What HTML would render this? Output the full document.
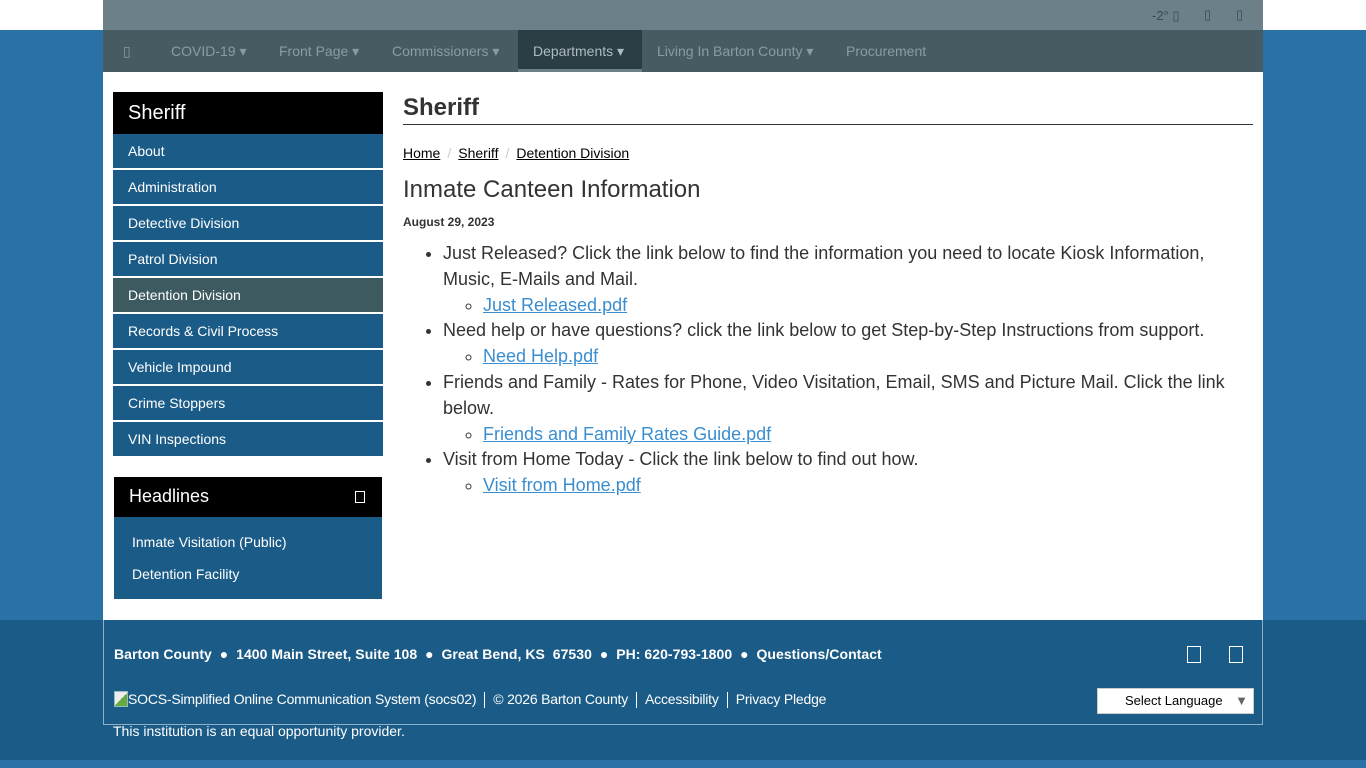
<!DOCTYPE html>
<html><head><meta charset="utf-8"><style>
*{box-sizing:border-box;margin:0;padding:0}
body{width:1366px;height:768px;overflow:hidden;background:#2a71a6;font-family:"Liberation Sans",Arial,sans-serif;position:relative}
.topw{position:absolute;left:0;top:0;width:1366px;height:30px;background:#fff}
.top{position:absolute;left:103px;top:0;width:1160px;height:30px;background:#6c8089;color:#3c4a50;font-size:13px}
.nav{position:absolute;left:103px;top:30px;width:1160px;height:42px;background:#475b63}
.nav span{position:absolute;top:13px;color:#8a9ca3;font-size:14px}
.nav .act{background:#2b3d45;top:0;height:42px;padding-top:13px;border-bottom:3px solid #6c8089;color:#aebcc1}
.main{position:absolute;left:103px;top:72px;width:1160px;height:548px;background:#fff}
.side{position:absolute;left:10px;top:20px;width:270px}
.sh{background:#000;color:#fff;font-size:20px;height:42px;line-height:42px;padding-left:15px}
.si{background:#1b5b87;color:#fff;font-size:14px;height:34px;line-height:34px;padding-left:15px;margin-bottom:2px}
.si.d{background:#3d5a60}
.hl{position:absolute;left:11px;top:405px;width:268px;height:122px;background:#1b5b87}
.hl .h{background:#000;color:#fff;font-size:18px;height:40px;line-height:38px;padding-left:15px;position:relative}
.hl .h i{position:absolute;right:17px;top:14px;width:10px;height:12px;border:1px solid #fff}
.hl p{color:#fff;font-size:14px;padding-left:18px;margin-top:17px}
.hl p+p{margin-top:16px}
.cont{position:absolute;left:300px;top:0;width:850px;color:#333}
h1{font-size:24px;font-weight:bold;margin-top:20px;height:33px;border-bottom:1px solid #333;padding-top:2px}
.bc{font-size:14px;margin-top:20px;color:#000}
.bc a{color:#000;text-decoration:underline}
.bc b{color:#ccc;font-weight:normal;margin:0 7px}
h2{font-size:24px;font-weight:normal;margin-top:15px}
.dt{font-size:12px;font-weight:bold;margin-top:11px}
ul{margin-top:12px;padding-left:40px;font-size:18px;line-height:25.8px;color:#333}
ul ul{margin-top:0;list-style:circle}
ul a{color:#3a8ed0;text-decoration:underline}
.foot{position:absolute;left:0;top:620px;width:1366px;height:140px;background:#1b5b87}
.fbox{position:absolute;left:103px;top:0;width:1160px;height:105px;border:1px solid #8fb0c8;border-top:none}
.f1{position:absolute;left:10px;top:26px;color:#fff;font-size:14px;font-weight:bold;letter-spacing:0.05px}
.f2{position:absolute;left:10px;top:71px;color:#fff;font-size:14px;letter-spacing:-0.2px}
.f2 s{text-decoration:none;border-left:1px solid #fff;margin:0 8px;display:inline-block;height:16px;vertical-align:middle}
.f2 em{display:inline-block;width:14px;height:16px;border:1px solid #9bb;background:linear-gradient(135deg,#eee 50%,#6a4 50%);vertical-align:-3px}
.f3{position:absolute;left:113px;top:103px;color:#fff;font-size:14px}
.ic{position:absolute;top:26px;width:14px;height:17px;border:1.5px solid #fff}
.lang{position:absolute;left:993px;top:68px;width:157px;height:26px;background:#fff;border:1px solid #ccc;font-size:13px;line-height:24px;padding-left:27px;color:#000}
</style></head><body>
<div class="topw"></div>
<div class="top"><span style="position:absolute;left:1049px;top:8px">-2° ▯</span><span style="position:absolute;left:1101px;top:7px">▯</span><span style="position:absolute;left:1133px;top:7px">▯</span></div>
<div class="nav">
<span style="left:20px">▯</span>
<span style="left:68px">COVID-19 ▾</span>
<span style="left:176px">Front Page ▾</span>
<span style="left:289px">Commissioners ▾</span>
<span class="act" style="left:415px;width:124px;padding-left:15px">Departments ▾</span>
<span style="left:554px">Living In Barton County ▾</span>
<span style="left:743px">Procurement</span>
</div>
<div class="main">
<div class="side">
<div class="sh">Sheriff</div>
<div class="si">About</div><div class="si">Administration</div><div class="si">Detective Division</div><div class="si">Patrol Division</div><div class="si d">Detention Division</div><div class="si">Records &amp; Civil Process</div><div class="si">Vehicle Impound</div><div class="si">Crime Stoppers</div><div class="si">VIN Inspections</div>
</div>
<div class="hl"><div class="h">Headlines<i></i></div><p>Inmate Visitation (Public)</p><p>Detention Facility</p></div>
<div class="cont">
<h1>Sheriff</h1>
<div class="bc"><a>Home</a><b>/</b><a>Sheriff</a><b>/</b><a>Detention Division</a></div>
<h2>Inmate Canteen Information</h2>
<div class="dt">August 29, 2023</div>
<ul>
<li>Just Released? Click the link below to find the information you need to locate Kiosk Information, Music, E-Mails and Mail.<ul><li><a>Just Released.pdf</a></li></ul></li>
<li>Need help or have questions? click the link below to get Step-by-Step Instructions from support.<ul><li><a>Need Help.pdf</a></li></ul></li>
<li>Friends and Family - Rates for Phone, Video Visitation, Email, SMS and Picture Mail. Click the link below.<ul><li><a>Friends and Family Rates Guide.pdf</a></li></ul></li>
<li>Visit from Home Today - Click the link below to find out how.<ul><li><a>Visit from Home.pdf</a></li></ul></li>
</ul>
</div>
</div>
<div class="foot">
<div class="fbox">
<div class="f1">Barton County &nbsp;●&nbsp; 1400 Main Street, Suite 108 &nbsp;●&nbsp; Great Bend, KS&nbsp; 67530 &nbsp;●&nbsp; PH: 620-793-1800 &nbsp;●&nbsp; Questions/Contact</div>
<div class="f2"><em></em>SOCS-Simplified Online Communication System (socs02)<s></s>© 2026 Barton County<s></s>Accessibility<s></s>Privacy Pledge</div>
<div class="ic" style="left:1083px"></div><div class="ic" style="left:1125px"></div>
<div class="lang">Select Language <span style="position:absolute;right:5px;color:#666">▼</span></div>
</div>
<div class="f3">This institution is an equal opportunity provider.</div>
</div>
</body></html>
